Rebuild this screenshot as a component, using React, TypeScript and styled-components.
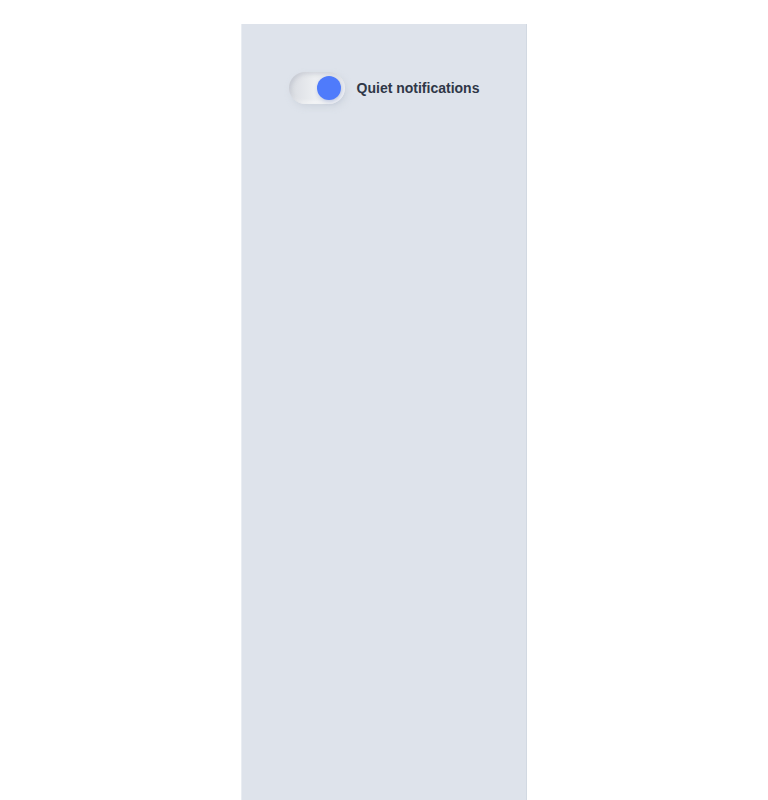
import { useState } from "react";
import styled, { createGlobalStyle } from "styled-components";

const GlobalStyle = createGlobalStyle`
  html, body {
    margin: 0;
    padding: 0;
    background: #ffffff;
  }
  body {
    font-family: "Liberation Sans", Arial, sans-serif;
  }
`;

const Page = styled.div`
  display: flex;
  justify-content: center;
  padding-top: 24px;
`;

const Panel = styled.div`
  width: 286px;
  min-height: 800px;
  background-color: #dee3eb;
  box-shadow: inset 1px 0 0 rgba(255, 255, 255, 0.35),
    inset -1px 0 0 rgba(190, 198, 210, 0.35);
  display: flex;
  flex-direction: column;
  align-items: center;
  padding-top: 40px;
  box-sizing: border-box;
`;

const Row = styled.label`
  display: flex;
  align-items: center;
  gap: 12px;
  cursor: pointer;
  padding: 8px 0;
`;

const Track = styled.button<{ $on: boolean }>`
  position: relative;
  width: 56px;
  height: 32px;
  border: none;
  padding: 0;
  border-radius: 16px;
  background: linear-gradient(90deg, #d9dce2 0%, #eceef1 45%, #e6e8ec 100%);
  box-shadow: inset 2px 2px 4px rgba(170, 176, 188, 0.45),
    inset -2px -2px 4px rgba(255, 255, 255, 0.7),
    2px 3px 6px rgba(180, 188, 200, 0.35);
  cursor: pointer;
`;

const Knob = styled.span<{ $on: boolean }>`
  position: absolute;
  top: 4px;
  left: ${(p) => (p.$on ? "28px" : "4px")};
  width: 24px;
  height: 24px;
  border-radius: 50%;
  background: #4f7bfb;
  box-shadow: 1px 2px 4px rgba(60, 90, 180, 0.25);
  transition: left 0.2s ease;
`;

const Label = styled.span`
  font-size: 14px;
  font-weight: 700;
  color: #2f3747;
`;

export default function App() {
  const [on, setOn] = useState(true);
  return (
    <>
      <GlobalStyle />
      <Page>
        <Panel>
          <Row>
            <Track $on={on} onClick={() => setOn(!on)} aria-pressed={on}>
              <Knob $on={on} />
            </Track>
            <Label>Quiet notifications</Label>
          </Row>
        </Panel>
      </Page>
    </>
  );
}
